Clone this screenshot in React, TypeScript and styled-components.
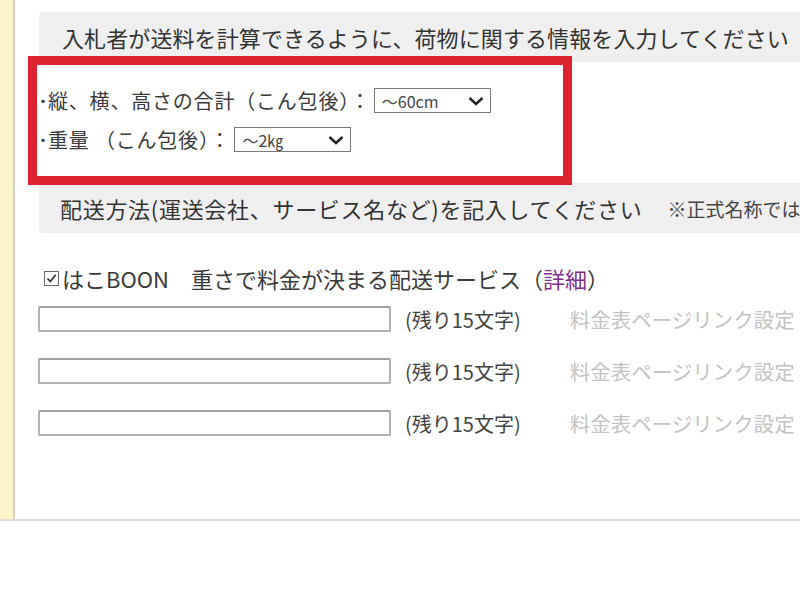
import React from 'react'
import styled, { createGlobalStyle } from 'styled-components'

const GlobalStyle = createGlobalStyle`
  html, body {
    margin: 0;
    padding: 0;
    background: #fff;
    overflow: hidden;
  }
  body {
    font-family: "Noto Sans CJK JP", "Noto Sans", sans-serif;
    color: #333;
  }
`;

const Frame = styled.div`
  display: flex;
  height: 521px;
  border-bottom: 2px solid #dedede;
  box-sizing: border-box;
`;

const SideStrip = styled.div`
  flex: 0 0 13px;
  background: #fdf4c9;
  border-right: 2px solid #d6d2bf;
`;

const Content = styled.div`
  flex: 1;
  min-width: 0;
  padding-top: 12px;
  white-space: nowrap;
  overflow: hidden;
`;

const SectionHead = styled.div<{ $overlap?: number; $spacing?: number }>`
  display: flex;
  align-items: center;
  height: 50px;
  margin-left: 24px;
  margin-top: ${p => (p.$overlap ? -p.$overlap : 0)}px;
  padding-left: ${p => (p.$overlap ? 21 : 23)}px;
  background: #efefef;
  border-radius: 4px 0 0 4px;
  font-size: 22px;
  color: #333;
  letter-spacing: ${p => p.$spacing ?? 0}px;
`;

const Note = styled.span`
  margin-left: 25px;
  font-size: 19px;
  color: #444;
  letter-spacing: 0;
`;

const Highlight = styled.div`
  position: relative;
  z-index: 1;
  box-sizing: border-box;
  width: 544px;
  height: 129px;
  margin-top: -6px;
  margin-left: 13px;
  padding: 23px 0 0 1px;
  border: 9px solid #db2430;
  display: flex;
  flex-direction: column;
  gap: 14px;
`;

const Field = styled.div`
  display: flex;
  align-items: center;
  height: 25px;
  font-size: 20px;
  color: #3a3a3a;
  letter-spacing: 0.8px;
`;

const Bullet = styled.span`
  width: 10px;
  font-size: 20px;
  letter-spacing: 0;
`;

const SelectBox = styled.div<{ $gap: number }>`
  box-sizing: border-box;
  display: flex;
  align-items: center;
  justify-content: space-between;
  flex-shrink: 0;
  width: 117px;
  height: 25px;
  margin-left: ${p => p.$gap}px;
  padding: 0 6px 0 7px;
  border: 1px solid #7a7a7a;
  background: #fff;
  font-size: 16px;
  color: #444;
  letter-spacing: 0;
`;

const CheckRow = styled.label`
  display: flex;
  align-items: center;
  height: 24px;
  margin-top: 33px;
  padding-left: 29px;
  font-size: 22px;
  color: #3a3a3a;
`;

const CheckBox = styled.span`
  display: flex;
  align-items: center;
  justify-content: center;
  box-sizing: border-box;
  width: 15px;
  height: 15px;
  margin-right: 3px;
  border: 1.5px solid #666;
  background: #fff;
`;

const Detail = styled.span`
  color: #7d2f8e;
`;

const InputList = styled.div`
  display: flex;
  flex-direction: column;
  gap: 26px;
  margin-top: 16px;
  padding-left: 23px;
`;

const InputRow = styled.div`
  display: flex;
  align-items: center;
  height: 26px;

  & > * {
    flex-shrink: 0;
  }
`;

const TextInput = styled.input`
  box-sizing: border-box;
  width: 353px;
  height: 26px;
  margin: 0;
  border: 2px solid #b3b3b3;
  border-top-color: #a0a0a0;
  border-radius: 2px;
  background: #fff;
`;

const Remaining = styled.span`
  margin-left: 14px;
  font-size: 20px;
  color: #444;
`;

const RateLink = styled.span`
  margin-left: 49px;
  font-size: 20.5px;
  color: #c3c3c3;
`;

const Chevron = () => (
  <svg width="16" height="10" viewBox="0 0 16 10">
    <polyline points="1.5,2 8,8 14.5,2" fill="none" stroke="#222" strokeWidth="2.4" />
  </svg>
);

const Check = () => (
  <svg width="11" height="11" viewBox="0 0 11 11">
    <polyline points="1.5,5.5 4.3,8.5 9.8,1.8" fill="none" stroke="#333" strokeWidth="1.8" />
  </svg>
);

const rows = [0, 1, 2];

const App: React.FC = () => {
  return (
    <>
      <GlobalStyle />
      <Frame>
        <SideStrip />
        <Content>
          <SectionHead $spacing={0.1}>入札者が送料を計算できるように、荷物に関する情報を入力してください</SectionHead>

          <Highlight>
            <Field>
              <Bullet>･</Bullet>縦、横、高さの合計（こん包後）：
              <SelectBox $gap={3}>
                <span>〜60cm</span>
                <Chevron />
              </SelectBox>
            </Field>
            <Field>
              <Bullet>･</Bullet>重量 （こん包後）：
              <SelectBox $gap={4}>
                <span>〜2㎏</span>
                <Chevron />
              </SelectBox>
            </Field>
          </Highlight>

          <SectionHead $overlap={2} $spacing={0.7}>
            配送方法(運送会社、サービス名など)を記入してください
            <Note>※正式名称では</Note>
          </SectionHead>

          <CheckRow>
            <CheckBox><Check /></CheckBox>
            はこBOON　重さで料金が決まる配送サービス（<Detail>詳細</Detail>）
          </CheckRow>

          <InputList>
            {rows.map(i => (
              <InputRow key={i}>
                <TextInput type="text" />
                <Remaining>(残り15文字)</Remaining>
                <RateLink>料金表ページリンク設定</RateLink>
              </InputRow>
            ))}
          </InputList>
        </Content>
      </Frame>
    </>
  )
}

export default App
